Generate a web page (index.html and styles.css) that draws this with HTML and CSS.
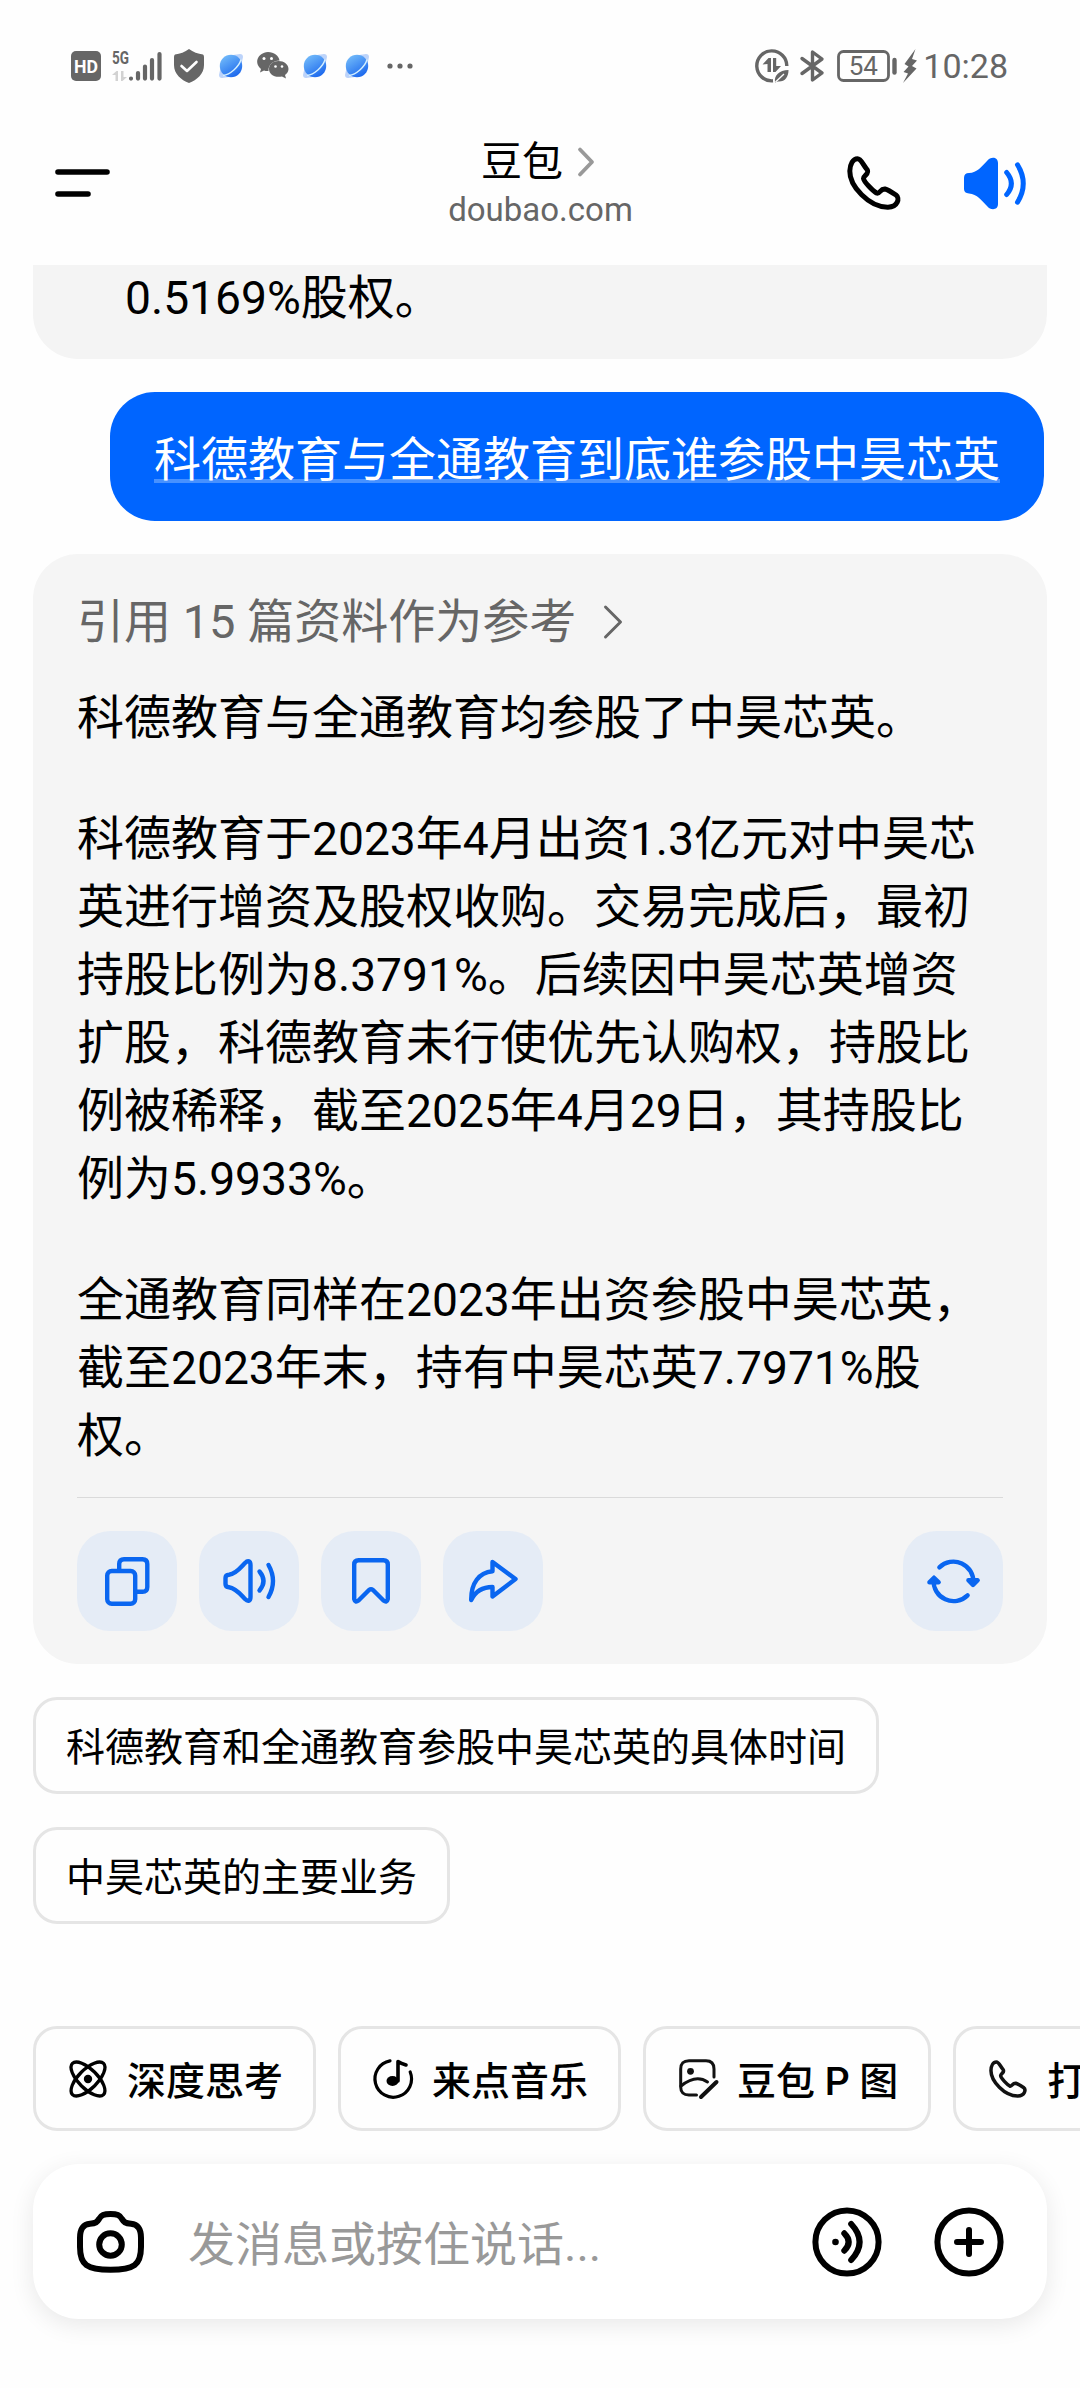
FILE: index.html
```html
<!DOCTYPE html>
<html lang="zh-CN">
<head>
    <meta charset="UTF-8">
    <meta name="viewport" content="width=device-width, initial-scale=1.0">
    <title>豆包</title>
    <link rel="stylesheet" href="styles.css">
</head>
<body>
    <!-- Shared shapes -->
    <svg class="defs" width="0" height="0">
        <defs>
            <linearGradient id="planet-fill" x1="0" y1="0" x2="0.6" y2="1">
                <stop offset="0" stop-color="#7cc4fb"></stop>
                <stop offset="1" stop-color="#1f6bee"></stop>
            </linearGradient>
            <symbol id="planet" viewBox="0 0 24 24">
                <path d="M14 1 L21 0 Q24 0 24 3 L22.5 10 Z M10 23 L3 24 Q0 24 0 21 L1.5 14 Z" fill="#bcd3fa"></path>
                <circle cx="12" cy="12" r="11.2" fill="url(#planet-fill)"></circle>
                <path d="M4 21.5 C11 20.5 20 13 22 5.5" fill="none" stroke="#d5f0ff" stroke-width="1.4"></path>
            </symbol>
            <symbol id="phone" viewBox="0 0 54 54">
                <path d="M2.8 15 C3 8 6 2.8 10.5 2.8 C14 2.8 15.5 8 20 13.5 C23 18 16.5 19 16.5 22.5 C17 26 26 35 29.5 37 C33 38.5 33 32.5 38 33 C40 33.5 46 37 49 39 C53 42 51 51 41 51.2 C22 51.5 2.5 30 2.8 15 Z" fill="none" stroke="currentColor" stroke-width="5" stroke-linejoin="round"></path>
            </symbol>
        </defs>
    </svg>

    <div class="status">
        <div class="status-left">
            <svg class="hd" width="30" height="30" viewBox="0 0 30 30">
                <rect width="30" height="30" rx="5" fill="#666"></rect>
                <text x="3" y="21.5" class="hd-text" textLength="24" lengthAdjust="spacingAndGlyphs">HD</text>
            </svg>
            <svg class="signal" width="51" height="34" viewBox="0 0 51 34">
                <text x="0" y="14.5" class="net-text" textLength="17" lengthAdjust="spacingAndGlyphs">5G</text>
                <path d="M0 26 L4.5 22 H6 V32 H3.5 V26 Z M9 22 H11.5 V28 H15 L10.5 32 H9 Z" fill="#d2d2d2"></path>
                <path d="M19 29.5 V29.6 M26 24 V29.6 M33 17.5 V29.6 M40 11 V29.6 M47.5 5 V29.6" stroke="#666" stroke-width="4.2" stroke-linecap="round"></path>
            </svg>
            <svg class="shield" width="30" height="34" viewBox="0 0 30 34">
                <path d="M15 0 C19 3 24 5 29 5.5 Q30 6 30 8 V16 C30 25 23 31 15 34 C7 31 0 25 0 16 V8 Q0 6 1 5.5 C6 5 11 3 15 0 Z" fill="#666"></path>
                <path d="M7.5 17 L13 22 L22.5 13" fill="none" stroke="#fff" stroke-width="2.6" stroke-linecap="round" stroke-linejoin="round"></path>
            </svg>
            <svg class="planet" width="24" height="24"><use href="#planet"></use></svg>
            <svg class="wechat" width="32" height="27" viewBox="0 0 32 27">
                <path d="M11 0 C17 0 22 4 22.5 8.5 C16 8.5 11 13 11.5 19 Q9 19.3 7 18.4 L3 20.5 L4 17 C-3 11 0 1 11 0 Z" fill="#666"></path>
                <path d="M21.5 9 C27 9 31.5 12.5 31.5 17 C31.5 20 29.5 22 28 23 L29 26.5 L25 24.5 C17 26 12 22 12 17 C12 12.5 16 9 21.5 9 Z" fill="#666"></path>
                <g fill="#fff">
                    <circle cx="7" cy="6.5" r="1.5"></circle>
                    <circle cx="14.5" cy="6.5" r="1.5"></circle>
                    <circle cx="18.5" cy="14.5" r="1.3"></circle>
                    <circle cx="25" cy="14.5" r="1.3"></circle>
                </g>
            </svg>
            <svg class="planet" width="24" height="24"><use href="#planet"></use></svg>
            <svg class="planet" width="24" height="24"><use href="#planet"></use></svg>
            <svg class="dots" width="26" height="6" viewBox="0 0 26 6">
                <g fill="#666">
                    <circle cx="3" cy="3" r="2.6"></circle>
                    <circle cx="13" cy="3" r="2.6"></circle>
                    <circle cx="23" cy="3" r="2.6"></circle>
                </g>
            </svg>
        </div>
        <div class="status-right">
            <svg class="data" width="34" height="34" viewBox="0 0 34 34">
                <path d="M18 31.8 A15 15 0 1 1 31.8 17" fill="none" stroke="#666" stroke-width="3.4"></path>
                <path d="M7.5 15.5 L13.5 9 H16 V23 H12.5 V15 Z M18 9 H21.2 V17 H26 L20.5 23 H18 Z" fill="#666"></path>
                <path d="M20 33.5 C19 26 24 21.5 33.5 21 C33.5 28 30 33 23 32.5 Z" fill="#666"></path>
                <path d="M20.5 33 L29 25" stroke="#fff" stroke-width="1.3"></path>
            </svg>
            <svg class="bluetooth" width="25" height="32" viewBox="0 0 25 32">
                <path d="M2 8.5 L22 23 L12.5 30 V2 L22 9 L2 23.5" fill="none" stroke="#666" stroke-width="3.4" stroke-linecap="round" stroke-linejoin="round"></path>
            </svg>
            <svg class="battery" width="60" height="32" viewBox="0 0 60 32">
                <rect x="1.5" y="1.5" width="50" height="29" rx="5" fill="none" stroke="#666" stroke-width="2.8"></rect>
                <path d="M57.5 10 V22.5" stroke="#666" stroke-width="4.4" stroke-linecap="round"></path>
                <text x="26.3" y="25" class="battery-text">54</text>
            </svg>
            <svg class="bolt" width="14" height="34" viewBox="0 0 14 34">
                <path d="M12.5 0 L1.5 15 L5.5 17.5 L0.5 23 L5 24.5 L0 34 L13.5 19.5 L9 17 L14 11.5 L9 10 Z" fill="#666"></path>
            </svg>
            <span class="clock">10:28</span>
        </div>
    </div>

    <div class="header">
        <svg class="menu" width="55" height="28" viewBox="0 0 55 28">
            <path d="M3 3 H52 M3 25 H33" stroke="#000" stroke-width="5.6" stroke-linecap="round"></path>
        </svg>
        <div class="title">
            <div class="title-name">
                豆包
                <svg width="18" height="30" viewBox="0 0 18 30">
                    <path d="M3 2.5 L15 15 L3 27.5" fill="none" stroke="#999" stroke-width="3.8" stroke-linecap="round" stroke-linejoin="round"></path>
                </svg>
            </div>
            <div class="title-sub">doubao.com</div>
        </div>
        <div class="header-actions">
            <svg width="54" height="54"><use href="#phone"></use></svg>
            <svg width="62" height="51" viewBox="0 0 62 51">
                <path d="M0 20 Q0 15 5 15 C13 15 18 8 23 3 C27 -2 34 -1 34 5 V46 C34 52 27 53 23 48 C18 43 13 36 5 35.5 Q0 35 0 31 Z" fill="#0065ff"></path>
                <path d="M42.7 14.5 Q52 25.5 42.7 36.5 M53.5 6.8 Q65 25.5 53.5 44.2" fill="none" stroke="#0065ff" stroke-width="5" stroke-linecap="round"></path>
            </svg>
        </div>
    </div>

    <div class="chat">
        <div class="bubble bubble-prev"><span class="num">0.5169%</span>股权。</div>
        <div class="bubble bubble-user"><span class="link">科德教育与全通教育到底谁参股中昊芯英</span></div>
        <div class="bubble bubble-bot">
            <div class="refs">
                引用 15 篇资料作为参考
                <svg width="20" height="34" viewBox="0 0 20 34">
                    <path d="M2.5 2 L17.5 17 L2.5 32" fill="none" stroke="#666" stroke-width="3" stroke-linecap="round" stroke-linejoin="round"></path>
                </svg>
            </div>
            <p>科德教育与全通教育均参股了中昊芯英。</p>
            <p>科德教育于<span class="num">2023</span>年<span class="num">4</span>月出资<span class="num">1.3</span>亿元对中昊芯英进行增资及股权收购。交易完成后，最初持股比例为<span class="num">8.3791%</span>。后续因中昊芯英增资扩股，科德教育未行使优先认购权，持股比例被稀释，截至<span class="num">2025</span>年<span class="num">4</span>月<span class="num">29</span>日，其持股比例为<span class="num">5.9933%</span>。</p>
            <p>全通教育同样在<span class="num">2023</span>年出资参股中昊芯英，截至<span class="num">2023</span>年末，持有中昊芯英<span class="num">7.7971%</span>股权。</p>
            <div class="actions">
                <div class="action">
                    <svg width="45" height="49" viewBox="0 0 45 49">
                        <rect x="2.2" y="14" width="28" height="32.8" rx="4.5"></rect>
                        <path d="M14.2 13 V7 Q14.2 2.2 19 2.2 H37.5 Q42.3 2.2 42.3 7 V30 Q42.3 34.8 37.5 34.8 H32"></path>
                    </svg>
                </div>
                <div class="action">
                    <svg width="52" height="44" viewBox="0 0 52 44">
                        <path d="M2.5 19 Q2.5 16 6 15.8 C13 15 18 8 22 4 C25 1 27.5 2 27.5 6 V38 C27.5 42 25 43 22 40 C18 36 13 29 6 28.2 Q2.5 28 2.5 25 Z"></path>
                        <path d="M36.5 12.5 Q44.5 22 36.5 31.5 M45.5 6 Q54.5 22 45.5 38"></path>
                    </svg>
                </div>
                <div class="action">
                    <svg width="38" height="46" viewBox="0 0 38 46">
                        <path d="M2.2 41 V6.5 Q2.2 2.2 6.5 2.2 H31.5 Q35.8 2.2 35.8 6.5 V41 Q35 45 31.5 42.5 L21 32 Q19 30.5 17 32 L6.5 42.5 Q3 45 2.2 41 Z"></path>
                    </svg>
                </div>
                <div class="action">
                    <svg width="49" height="44" viewBox="0 0 49 44">
                        <path d="M2.2 41 C2 24 10 13.5 23.5 12.2 V3 L46.5 20 L23.5 37.5 V28 C14 28 7 31 2.2 41 Z"></path>
                    </svg>
                </div>
                <div class="action action-last">
                    <svg width="53" height="45" viewBox="0 0 53 45">
                        <path d="M12.4 8.4 A20 20 0 0 1 46.4 24 M41.4 21.3 L46 26 L50.7 21.3 Z"></path>
                        <path d="M40.6 36.4 A20 20 0 0 1 6.6 21 M2.4 23.3 L7 18.7 L11.7 23.3 Z"></path>
                    </svg>
                </div>
            </div>
        </div>
        <div class="suggest">科德教育和全通教育参股中昊芯英的具体时间</div>
        <div class="suggest">中昊芯英的主要业务</div>
    </div>

    <div class="tools">
        <div class="tool">
            <svg width="44" height="40" viewBox="0 0 44 40">
                <g fill="none" stroke="#000" stroke-width="3.3">
                    <ellipse cx="22" cy="20" rx="22" ry="9.5" transform="rotate(45 22 20)"></ellipse>
                    <ellipse cx="22" cy="20" rx="22" ry="9.5" transform="rotate(-45 22 20)"></ellipse>
                </g>
                <circle cx="22" cy="20" r="4.2"></circle>
            </svg>
            <span>深度思考</span>
        </div>
        <div class="tool">
            <svg width="44" height="40" viewBox="0 0 44 40">
                <path d="M19 1.9 A18.3 18.3 0 1 0 39.2 13" fill="none" stroke="#000" stroke-width="3.2" stroke-linecap="round"></path>
                <ellipse cx="21.5" cy="22" rx="6" ry="5"></ellipse>
                <path d="M27 22 V2.5 Q30 4.5 35 6" fill="none" stroke="#000" stroke-width="3.6" stroke-linecap="round" stroke-linejoin="round"></path>
            </svg>
            <span>来点音乐</span>
        </div>
        <div class="tool">
            <svg width="44" height="40" viewBox="0 0 44 40">
                <g fill="none" stroke="#111" stroke-width="3" stroke-linecap="round" stroke-linejoin="round">
                    <path d="M20.5 36 H13 Q4.7 36 4.7 28 V10 Q4.7 1.7 13 1.7 H30 Q38 1.7 38 10 V18"></path>
                    <path d="M5 27 Q20 15 31.5 23"></path>
                    <path d="M40.5 23 L25 38" stroke-width="4"></path>
                </g>
                <circle cx="14.5" cy="12.3" r="3.4" fill="#111"></circle>
            </svg>
            <span>豆包 P 图</span>
        </div>
        <div class="tool">
            <svg class="tool-phone" width="38" height="38"><use href="#phone"></use></svg>
            <span>打电话</span>
        </div>
    </div>

    <div class="composer">
        <svg width="67" height="62" viewBox="0 0 67 62">
            <path d="M3 36 V27 C3 18 6 13.5 13 12.8 C19 12.5 20 11 22 8 C24 4 27 3 33.5 3 C40 3 43 4 45 8 C47 11 48 12.5 54 12.8 C61 13.5 64 18 64 27 V36 C64 54 57 58.8 33.5 58.8 C10 58.8 3 54 3 36 Z"></path>
            <circle cx="33.5" cy="33.5" r="11.3"></circle>
        </svg>
        <div class="placeholder">发消息或按住说话...</div>
        <svg width="70" height="70" viewBox="0 0 70 70">
            <circle cx="35" cy="35" r="31.6"></circle>
            <circle cx="23.5" cy="35" r="3.3" class="solid"></circle>
            <path d="M32.3 26.3 Q41 35 32.3 43.7 M39.2 17 Q56 35 39.2 53"></path>
        </svg>
        <svg class="plus" width="70" height="70" viewBox="0 0 70 70">
            <circle cx="35" cy="35" r="31.6"></circle>
            <path d="M23 35 H47 M35 23 V47"></path>
        </svg>
    </div>
</body>
</html>
```
FILE: styles.css
```css
* {
    box-sizing: border-box;
}

body {
    margin: 0;
    width: 1080px;
    height: 2388px;
    overflow: hidden;
    display: flex;
    flex-direction: column;
    background: #fefefe;
    color: #000;
    font-family: Roboto, "Noto Sans CJK SC", sans-serif;
}

svg {
    display: block;
    flex: none;
    overflow: visible;
}

.defs {
    position: absolute;
}

/* Status bar */
.status {
    flex: none;
    height: 131px;
    padding: 0 72px 0 71px;
    display: flex;
    align-items: center;
    justify-content: space-between;
}

.status-left,
.status-right {
    display: flex;
    align-items: center;
}

.signal {
    margin-left: 11px;
}

.shield {
    margin-left: 11px;
}

.shield + .planet {
    margin-left: 15px;
}

.wechat {
    margin: 0 14px;
}

.planet + .planet {
    margin-left: 18px;
}

.dots {
    margin-left: 18px;
}

.hd-text {
    font: 700 19px Roboto, sans-serif;
    fill: #fff;
}

.net-text {
    font: 700 19px Roboto, sans-serif;
    fill: #666;
}

.battery-text {
    font: 400 26px Roboto, sans-serif;
    fill: #666;
    text-anchor: middle;
}

.bluetooth {
    margin-left: 11px;
}

.battery {
    margin-left: 12px;
}

.bolt {
    margin-left: 6px;
}

.clock {
    margin-left: 6px;
    color: #666;
    font-size: 34px;
    line-height: 40px;
}

/* Header */
.header {
    flex: none;
    height: 134px;
    padding: 0 54px 32px 55px;
    display: grid;
    grid-template-columns: 1fr auto 1fr;
    align-items: center;
}

.title {
    padding-top: 8px;
    text-align: center;
}

.title-name {
    display: flex;
    align-items: center;
    justify-content: center;
    gap: 14px;
    padding-right: 5px;
    font-size: 41px;
    line-height: 46px;
}

.title-sub {
    color: #666;
    font-size: 33px;
    line-height: 50px;
}

.header-actions {
    display: flex;
    align-items: center;
    justify-content: flex-end;
    gap: 63px;
}

/* Chat */
.chat {
    flex: none;
    height: 1761px;
    padding: 0 33px;
    display: flex;
    flex-direction: column;
    align-items: flex-start;
}

.bubble {
    flex: none;
    border-radius: 45px;
    font-size: 47px;
    line-height: 68.1px;
}

.num {
    font-size: 46.2px;
}

.bubble-prev {
    width: 1014px;
    height: 94px;
    padding: 0 92px;
    border-radius: 0 0 45px 45px;
    background: #f4f4f4;
    line-height: 65px;
}

.bubble-user {
    align-self: flex-end;
    height: 129px;
    margin: 33px 3px 33px 0;
    padding: 34px 44px;
    background: #0065ff;
    color: #fff;
    line-height: 68px;
}

.link {
    display: block;
    height: 57px;
    border-bottom: 4px solid #4791ff;
}

.bubble-bot {
    width: 1014px;
    height: 1110px;
    padding: 34px 44px 33px;
    background: #f5f5f5;
    display: flex;
    flex-direction: column;
}

.refs {
    display: flex;
    align-items: center;
    gap: 27px;
    color: #666;
}

.bubble-bot p {
    margin: 0 0 52.6px;
}

.refs + p {
    margin-top: 28px;
}

.bubble-bot p:last-of-type {
    margin-bottom: 0;
}

.actions {
    display: flex;
    gap: 22px;
    margin-top: auto;
    padding-top: 33px;
    border-top: 1px solid #dadada;
}

.action {
    width: 100px;
    height: 100px;
    border-radius: 33px;
    background: #e5ecf6;
    display: flex;
    align-items: center;
    justify-content: center;
}

.action svg {
    fill: none;
    stroke: #0a66f0;
    stroke-width: 4.4;
    stroke-linecap: round;
    stroke-linejoin: round;
}

.action-last {
    margin-left: auto;
}

.suggest {
    flex: none;
    height: 97px;
    margin-top: 33px;
    padding: 0 30px;
    border: 3px solid #e5e5e5;
    border-radius: 24px;
    font-size: 39px;
    line-height: 96px;
}

.tools {
    flex: none;
    display: flex;
    gap: 22px;
    padding-left: 33px;
    overflow: hidden;
}

.tool {
    flex: none;
    height: 105px;
    padding: 0 30px;
    border: 3px solid #e5e5e5;
    border-radius: 24px;
    display: flex;
    align-items: center;
    gap: 17px;
    font-size: 39px;
    font-weight: 500;
}

.tool span {
    padding-bottom: 2px;
}

.tool-phone {
    margin: 0 3px;
    color: #111;
}

/* Input */
.composer {
    flex: none;
    height: 155px;
    margin: 33px 33px 0;
    padding: 0 43px 0 44px;
    border-radius: 46px;
    background: #fff;
    box-shadow: 0 6px 24px rgba(0, 0, 0, 0.09);
    display: flex;
    align-items: center;
}

.composer svg {
    fill: none;
    stroke: #000;
    stroke-width: 6;
    stroke-linecap: round;
}

.composer .solid {
    fill: #000;
    stroke: none;
}

.placeholder {
    flex: 1;
    margin-left: 44px;
    padding-bottom: 3px;
    color: #999;
    font-size: 47px;
}

.plus {
    margin-left: 52px;
}
```
